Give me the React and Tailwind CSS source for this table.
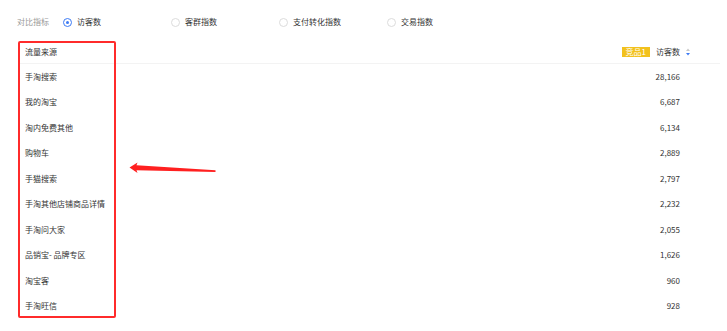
import React from 'react';

const metrics = [
  { label: '访客数', checked: true },
  { label: '客群指数', checked: false },
  { label: '支付转化指数', checked: false },
  { label: '交易指数', checked: false },
];

const rows = [
  ['手淘搜索', '28,166'],
  ['我的淘宝', '6,687'],
  ['淘内免费其他', '6,134'],
  ['购物车', '2,889'],
  ['手猫搜索', '2,797'],
  ['手淘其他店铺商品详情', '2,232'],
  ['手淘问大家', '2,055'],
  ['品销宝- 品牌专区', '1,626'],
  ['淘宝客', '960'],
  ['手淘旺信', '928'],
];

function Radio({ checked }) {
  return (
    <span
      className={
        checked
          ? 'flex h-[9px] w-[9px] items-center justify-center rounded-full border border-[#3d7bf5]'
          : 'flex h-[9px] w-[9px] items-center justify-center rounded-full border border-[#dcdcdc]'
      }
    >
      {checked && <span className="h-[3px] w-[3px] rounded-full bg-[#3d7bf5]" />}
    </span>
  );
}

function SortIcon() {
  return (
    <svg width="4" height="8" viewBox="0 0 4 8" className="ml-[6px]">
      <polygon points="0,3 2,0.5 4,3" fill="#c8c8c8" />
      <polygon points="0,5 2,7.5 4,5" fill="#3d7bf5" />
    </svg>
  );
}

export default function App() {
  return (
    <div
      className="relative h-[331px] w-[727px] overflow-hidden bg-white text-[8px] leading-none text-[#333]"
      style={{ fontFamily: '"Noto Sans CJK SC", "Noto Sans", sans-serif' }}
    >
      {/* metric selector */}
      <div className="flex h-[14px] items-center pl-[17px] mt-[15px]">
        <span className="w-[46px] text-[#999]">对比指标</span>
        {metrics.map(m => (
          <div key={m.label} className="flex w-[108px] items-center gap-[5px]">
            <Radio checked={m.checked} />
            <span>{m.label}</span>
          </div>
        ))}
      </div>

      {/* table */}
      <div className="ml-[18px] mr-[7px] mt-[12px]">
        <div className="flex h-[23px] items-center justify-between border-b border-[#f3f3f3] pl-[7px] pr-[30px]">
          <span>流量来源</span>
          <div className="flex items-center">
            <span className="mr-[6px] flex h-[10px] items-center bg-[#f2c11d] px-[4px] text-white">竞品1</span>
            <span>访客数</span>
            <SortIcon />
          </div>
        </div>
        {rows.map(([name, value]) => (
          <div key={name} className="flex h-[25.5px] items-center justify-between pl-[7px] pr-[40px]">
            <span>{name}</span>
            <span>{value}</span>
          </div>
        ))}
      </div>

      {/* annotation */}
      <div className="absolute left-[18px] top-[41px] h-[277px] w-[98px] rounded-[2px] border-2 border-[#ff2b2b]" />
      <svg className="absolute left-[125px] top-[158px]" width="95" height="20" viewBox="125 158 95 20">
        <polygon
          points="129.5,167.5 137.5,162.5 136.5,165.3 215.5,170.3 215.5,172 136.5,170.3 137.5,173"
          fill="#ff2020"
        />
      </svg>
    </div>
  );
}
